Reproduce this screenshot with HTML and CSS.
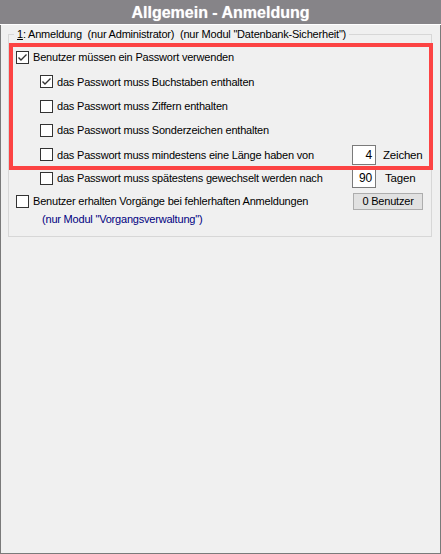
FILE: index.html
```html
<!DOCTYPE html>
<html lang="de">
<head>
  <meta charset="UTF-8">
  <title>Allgemein - Anmeldung</title>
  <link rel="stylesheet" href="styles.css">
</head>
<body>
  <div class="frame">
    <div class="title">Allgemein - Anmeldung</div>

    <fieldset class="group">
      <legend><u>1</u>: Anmeldung  (nur Administrator)  (nur Modul "Datenbank-Sicherheit")</legend>

      <div class="row r24">
        <span class="check checked"><svg viewBox="0 0 11 11"><polyline points="1.5,5.5 4,8 9.5,2.5"/></svg></span>
        <span class="label">Benutzer müssen ein Passwort verwenden</span>
      </div>
      <div class="row sub r25">
        <span class="check checked"><svg viewBox="0 0 11 11"><polyline points="1.5,5.5 4,8 9.5,2.5"/></svg></span>
        <span class="label">das Passwort muss Buchstaben enthalten</span>
      </div>
      <div class="row sub r24">
        <span class="check"></span>
        <span class="label">das Passwort muss Ziffern enthalten</span>
      </div>
      <div class="row sub r24">
        <span class="check"></span>
        <span class="label">das Passwort muss Sonderzeichen enthalten</span>
      </div>
      <div class="row sub r25">
        <span class="check"></span>
        <span class="label">das Passwort muss mindestens eine Länge haben von</span>
        <span class="extra"><span class="field">4</span><span class="unit">Zeichen</span></span>
      </div>
      <div class="row sub r22">
        <span class="check"></span>
        <span class="label">das Passwort muss spätestens gewechselt werden nach</span>
        <span class="extra"><span class="field">90</span><span class="unit days">Tagen</span></span>
      </div>
      <div class="row r24">
        <span class="check"></span>
        <span class="label">Benutzer erhalten Vorgänge bei fehlerhaften Anmeldungen</span>
        <span class="extra"><span class="button">0 Benutzer</span></span>
      </div>
      <div class="note">(nur Modul "Vorgangsverwaltung")</div>
    </fieldset>

    <div class="highlight"></div>
  </div>
</body>
</html>
```

FILE: styles.css
```css
body {
  margin: 0;
  background: #f0f0f0;
  font-family: "Liberation Sans", Arial, sans-serif;
  font-size: 11px;
  letter-spacing: -0.2px;
  color: #000;
}

.frame {
  position: relative;
  width: 441px;
  height: 554px;
  box-sizing: border-box;
  border: 1px solid #7a7a7a;
  border-top: none;
  background: #f0f0f0;
}

.title {
  height: 24px;
  margin: 0 -1px;
  background: #868488;
  color: #fff;
  font-weight: bold;
  font-size: 16px;
  letter-spacing: 0;
  line-height: 25px;
  text-align: center;
  border-bottom: 1px solid #fff;
  text-shadow: 0 0 1px rgba(255, 255, 255, 0.6);
}

.group {
  margin: 2px 8px 0 7px;
  padding: 4px 0 10px 0;
  border: 1px solid #d7d7d7;
}

.group legend {
  margin-left: 5px;
  padding: 0 3px;
  line-height: 14px;
  white-space: pre;
}

.row {
  display: flex;
  align-items: center;
  padding-left: 7px;
}

.row.sub {
  padding-left: 31px;
}

.r22 { height: 22px; }
.r24 { height: 24px; }
.r25 { height: 25px; }

.check {
  flex: none;
  width: 13px;
  height: 13px;
  box-sizing: border-box;
  border: 1px solid #333;
  background: #fff;
  display: flex;
}

.check svg {
  width: 11px;
  height: 11px;
  fill: none;
  stroke: #333;
  stroke-width: 1.4;
}

.label {
  flex: 1;
  margin-left: 4px;
  white-space: nowrap;
}

.extra {
  flex: none;
  width: 79px;
  display: flex;
  align-items: center;
}

.field {
  width: 24px;
  height: 20px;
  box-sizing: border-box;
  border: 1px solid #7a7a7a;
  background: #fff;
  text-align: right;
  padding-right: 3px;
  line-height: 18px;
  font-size: 12px;
}

.unit {
  margin-left: 7px;
  font-size: 11.5px;
}

.unit.days {
  margin-left: 9px;
}

.button {
  margin-left: 1px;
  width: 70px;
  height: 17px;
  box-sizing: border-box;
  border: 1px solid #adadad;
  background: #e1e1e1;
  text-align: center;
  line-height: 15px;
}

.note {
  padding-left: 33px;
  height: 13px;
  line-height: 13px;
  color: #000080;
}

.highlight {
  position: absolute;
  left: 8px;
  top: 43px;
  width: 424px;
  height: 127px;
  box-sizing: border-box;
  border: 4px solid #fc4343;
  pointer-events: none;
}
```
